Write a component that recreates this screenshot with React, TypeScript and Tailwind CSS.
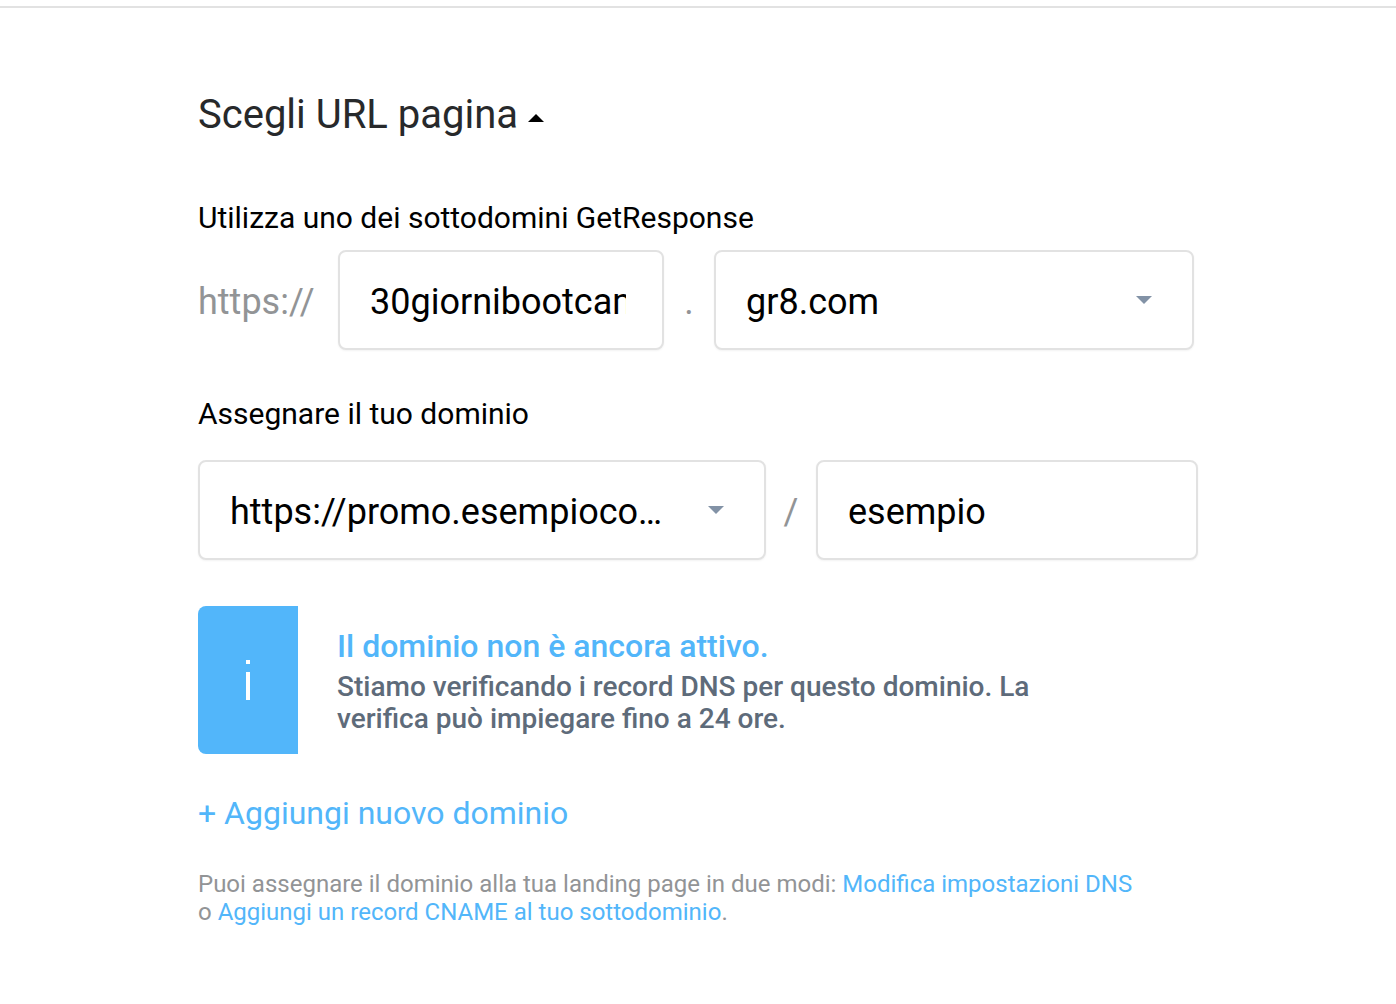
import { useState } from 'react';
import type { ComponentProps } from 'react';
import clsx from 'clsx';

const fieldStyles =
  'h-[100px] w-full rounded-lg border-2 border-[#e2e2e2] bg-white px-[30px] pt-1 text-4xl text-black shadow-xs outline-none focus:border-[#52b6fa]';

function TextField({ className, ...props }: ComponentProps<'input'>) {
  return <input type="text" className={clsx(fieldStyles, className)} {...props} />;
}

type SelectFieldProps = ComponentProps<'select'> & { options: string[] };

function SelectField({ options, className, ...props }: SelectFieldProps) {
  return (
    <div className={clsx('relative', className)}>
      <select className={clsx(fieldStyles, 'appearance-none truncate pr-20')} {...props}>
        {options.map((option) => (
          <option key={option}>{option}</option>
        ))}
      </select>
      <svg
        viewBox="0 0 16 8"
        className="pointer-events-none absolute top-[46px] right-[42px] h-2 w-4 fill-[#8292a6]"
        aria-hidden="true"
      >
        <path d="M0 0h16L8 8z" />
      </svg>
    </div>
  );
}

function DomainAlert() {
  return (
    <div role="status" className="mt-[46px] flex min-h-[148px]">
      <div className="flex w-[100px] shrink-0 items-center justify-center rounded-l-lg bg-[#52b6fa]">
        <svg viewBox="0 0 4 40" className="h-10 w-1 fill-white" aria-hidden="true">
          <path d="M0 0h4v4H0zM0 12h4v28H0z" />
        </svg>
      </div>
      <div className="flex max-w-[800px] flex-col justify-center pb-1 pl-[39px] font-medium">
        <p className="text-[32px] leading-[50px] text-[#52b6fa]">Il dominio non è ancora attivo.</p>
        <p className="text-[28px] leading-8 text-[#5e6b7a]">
          Stiamo verificando i record DNS per questo dominio. La
          <br />
          verifica può impiegare fino a 24 ore.
        </p>
      </div>
    </div>
  );
}

export default function App() {
  const [open, setOpen] = useState(true);
  const [subdomain, setSubdomain] = useState('30giornibootcamp');
  const [path, setPath] = useState('esempio');

  return (
    <div className="min-h-screen bg-white pt-1.5 font-[Roboto,sans-serif]">
      <main className="border-t-2 border-[#e2e2e2] px-6">
        <div className="mx-auto max-w-[1000px] pt-[82px] pb-16">
          <h1 className="text-[40px] leading-[50px] text-[#27292b]">
            <button
              type="button"
              className="flex items-center gap-2.5"
              aria-expanded={open}
              onClick={() => setOpen(!open)}
            >
              Scegli URL pagina
              <svg
                viewBox="0 0 16 8"
                className={clsx('mt-1.5 h-2 w-4 fill-black', !open && 'rotate-180')}
                aria-hidden="true"
              >
                <path d="M0 8h16L8 0z" />
              </svg>
            </button>
          </h1>

          {open && (
            <>
              {/* GetResponse subdomain */}
              <label htmlFor="subdomain" className="mt-[58px] block text-[30px] leading-10 text-black">
                Utilizza uno dei sottodomini GetResponse
              </label>
              <div className="mt-3 flex items-center text-4xl text-[#929496]">
                <span className="w-[140px] shrink-0 pt-1">https://</span>
                <div className="min-w-0 basis-[326px]">
                  <TextField
                    id="subdomain"
                    className="pr-9"
                    value={subdomain}
                    onChange={(e) => setSubdomain(e.target.value)}
                  />
                </div>
                <span className="w-[50px] shrink-0 pt-1 text-center">.</span>
                <SelectField
                  className="min-w-0 basis-[480px]"
                  aria-label="Sottodominio GetResponse"
                  options={['gr8.com']}
                />
              </div>

              {/* Custom domain */}
              <label htmlFor="domain" className="mt-11 block text-[30px] leading-10 text-black">
                Assegnare il tuo dominio
              </label>
              <div className="mt-[26px] flex items-center text-4xl text-[#929496]">
                <SelectField
                  id="domain"
                  className="min-w-0 basis-[568px]"
                  options={['https://promo.esempioco…']}
                />
                <span className="w-[50px] shrink-0 pt-1 text-center">/</span>
                <div className="min-w-0 flex-1">
                  <TextField
                    aria-label="Percorso"
                    value={path}
                    onChange={(e) => setPath(e.target.value)}
                  />
                </div>
              </div>

              <DomainAlert />

              <a href="#nuovo-dominio" className="mt-[39px] block text-[32px] leading-10 text-[#52b6fa]">
                + Aggiungi nuovo dominio
              </a>

              <p className="mt-[37px] text-2xl leading-7 text-[#929496]">
                Puoi assegnare il dominio alla tua landing page in due modi:{' '}
                <a href="#dns" className="text-[#52b6fa]">
                  Modifica impostazioni DNS
                </a>
                <br />o{' '}
                <a href="#cname" className="text-[#52b6fa]">
                  Aggiungi un record CNAME al tuo sottodominio
                </a>
                .
              </p>
            </>
          )}
        </div>
      </main>
    </div>
  );
}
